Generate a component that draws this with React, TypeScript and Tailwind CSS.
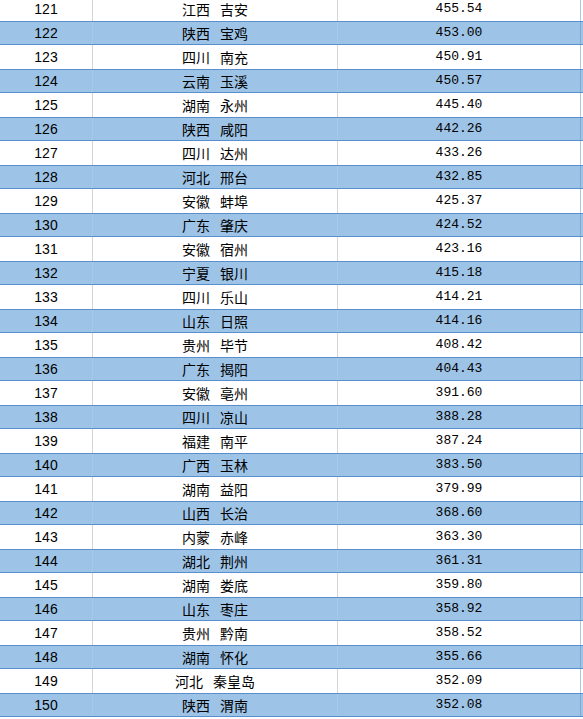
import React from "react";

const data: [number, string, string, string][] = [
  [121, "江西", "吉安", "455.54"],
  [122, "陕西", "宝鸡", "453.00"],
  [123, "四川", "南充", "450.91"],
  [124, "云南", "玉溪", "450.57"],
  [125, "湖南", "永州", "445.40"],
  [126, "陕西", "咸阳", "442.26"],
  [127, "四川", "达州", "433.26"],
  [128, "河北", "邢台", "432.85"],
  [129, "安徽", "蚌埠", "425.37"],
  [130, "广东", "肇庆", "424.52"],
  [131, "安徽", "宿州", "423.16"],
  [132, "宁夏", "银川", "415.18"],
  [133, "四川", "乐山", "414.21"],
  [134, "山东", "日照", "414.16"],
  [135, "贵州", "毕节", "408.42"],
  [136, "广东", "揭阳", "404.43"],
  [137, "安徽", "亳州", "391.60"],
  [138, "四川", "凉山", "388.28"],
  [139, "福建", "南平", "387.24"],
  [140, "广西", "玉林", "383.50"],
  [141, "湖南", "益阳", "379.99"],
  [142, "山西", "长治", "368.60"],
  [143, "内蒙", "赤峰", "363.30"],
  [144, "湖北", "荆州", "361.31"],
  [145, "湖南", "娄底", "359.80"],
  [146, "山东", "枣庄", "358.92"],
  [147, "贵州", "黔南", "358.52"],
  [148, "湖南", "怀化", "355.66"],
  [149, "河北", "秦皇岛", "352.09"],
  [150, "陕西", "渭南", "352.08"],
];

export default function App() {
  return (
    <div className="w-[583px] h-[719px] overflow-hidden bg-white text-black">
      <div className="mt-[-3px] flex flex-col">
        {data.map(([rank, prov, city, val], i) => {
          const blue = i % 2 === 1;
          return (
            <div
              key={rank}
              className={
                blue
                  ? "flex h-[24px] bg-[#9dc3e6] border-y border-[#5b8fcb]"
                  : "flex h-[24px] bg-white"
              }
            >
              <div
                className={
                  "w-[93px] shrink-0 flex items-center justify-center border-r text-[14px] font-['Liberation_Sans',sans-serif] " +
                  (blue ? "border-[#a9c9e8]" : "border-[#d4d4d4]")
                }
              >
                {rank}
              </div>
              <div
                className={
                  "w-[245px] shrink-0 flex items-center justify-center gap-[10px] border-r text-[14px] font-['Noto_Sans_CJK_SC',sans-serif] " +
                  (blue ? "border-[#a9c9e8]" : "border-[#d4d4d4]")
                }
              >
                <span>{prov}</span>
                <span>{city}</span>
              </div>
              <div
                className={
                  "w-[243px] shrink-0 flex items-center justify-center border-r text-[13px] font-['Liberation_Mono',monospace] " +
                  (blue ? "border-[#7fa9d8]" : "border-[#a9c9e8]")
                }
              >
                {val}
              </div>
              <div className="flex-1" />
            </div>
          );
        })}
      </div>
    </div>
  );
}
